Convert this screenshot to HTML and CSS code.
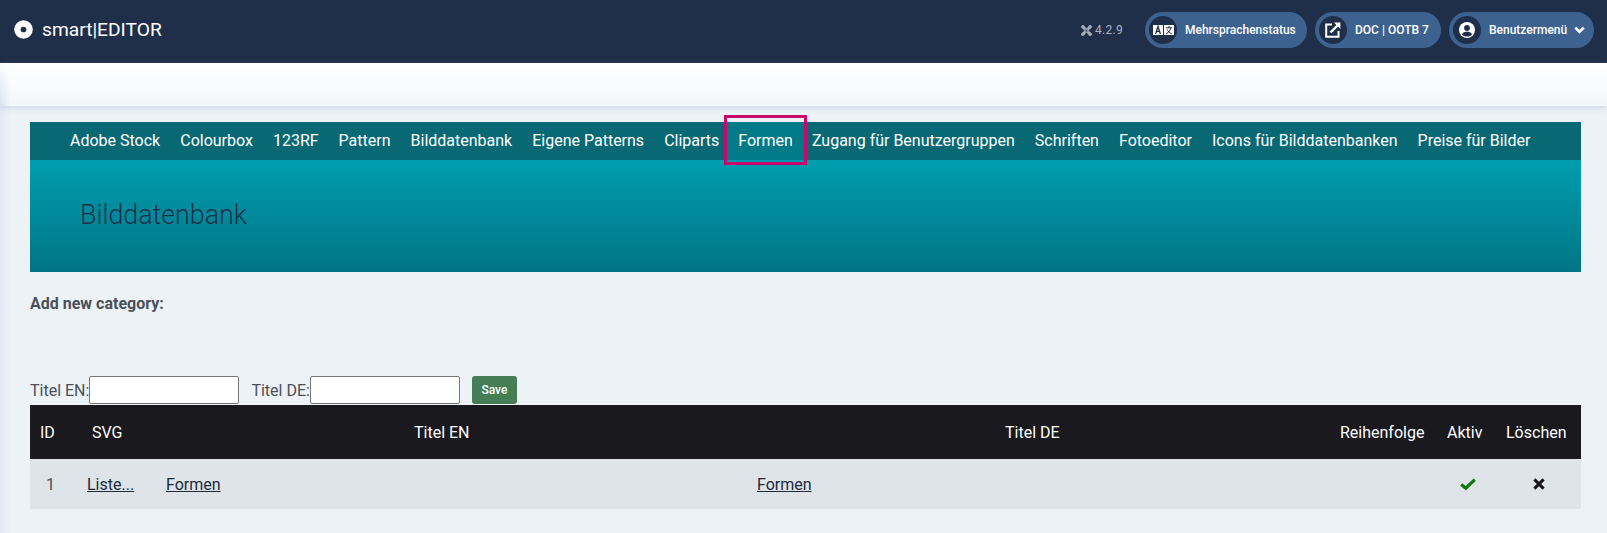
FILE: index.html
```html
<!DOCTYPE html>
<html lang="de">
<head>
<meta charset="utf-8">
<title>smart|EDITOR</title>
<link rel="stylesheet" href="styles.css">
</head>
<body>
<header class="topbar">
  <div class="brand">
    <svg class="brand-icon" viewBox="0 0 20 20"><circle cx="10" cy="10" r="9.8" fill="#fff"/><circle cx="10" cy="10" r="3" fill="#1f2f4a"/></svg>
    <span>smart|EDITOR</span>
  </div>
  <div class="top-right">
    <span class="version">
      <svg class="joomla" viewBox="0 0 12 12"><path d="M2 2 L10 10 M10 2 L2 10" stroke="#a4adba" stroke-width="3.2" fill="none"/><path d="M3 6 L6 3 L9 6 L6 9 Z" fill="#8d97a6"/><circle cx="6" cy="6" r="1" fill="#3e5170"/><circle cx="2" cy="2" r="1.9" fill="#a4adba"/><circle cx="10" cy="2" r="1.9" fill="#a4adba"/><circle cx="2" cy="10" r="1.9" fill="#a4adba"/><circle cx="10" cy="10" r="1.9" fill="#a4adba"/></svg>
      4.2.9
    </span>
    <a class="pill pill-lang">
      <span class="pill-icon"><svg viewBox="0 0 21 10" width="21" height="10"><rect width="10" height="10" fill="#fff"/><rect x="11" width="10" height="10" fill="#fff"/><path d="M2.6 9 L5 1.4 L7.4 9 M3.5 6.4 H6.5" stroke="#1f2f4a" stroke-width="1.3" fill="none"/><path d="M13 2.8 H19 M16 1 V2.8 M18 2.8 C17.2 5.6 15.6 7.6 13.2 8.8 M14.2 4.6 C15.2 6.6 17 8 18.8 8.8" stroke="#1f2f4a" stroke-width="1" fill="none"/></svg></span>
      <span>Mehrsprachenstatus</span>
    </a>
    <a class="pill pill-doc">
      <span class="pill-icon"><svg viewBox="0 0 16 16" width="16" height="16"><path d="M7 2.5 H1.2 V14.8 H13.5 V9" stroke="#fff" stroke-width="2" fill="none"/><path d="M5.5 10.5 L13 3" stroke="#fff" stroke-width="2.4" fill="none"/><path d="M9 0.6 H15.4 V7 Z" fill="#fff"/></svg></span>
      <span>DOC | OOTB 7</span>
    </a>
    <a class="pill pill-user">
      <span class="pill-icon"><svg viewBox="0 0 16 16" width="16" height="16"><circle cx="8" cy="8" r="8" fill="#fff"/><circle cx="8" cy="6" r="2.9" fill="#1f2f4a"/><path d="M2.9 12.6 C4 10 6 9.8 8 9.8 C10 9.8 12 10 13.1 12.6 C11.8 14 10 14.6 8 14.6 C6 14.6 4.2 14 2.9 12.6 Z" fill="#1f2f4a"/></svg></span>
      <span>Benutzermenü</span>
      <svg class="chevron" viewBox="0 0 12 8" width="11" height="8"><path d="M1.4 1.4 L6 6 L10.6 1.4" stroke="#fff" stroke-width="3" fill="none"/></svg>
    </a>
  </div>
</header>
<div class="subhead"></div>
<main class="content">
  <section class="banner">
    <nav class="tabs">
      <a class="tab">Adobe Stock</a>
      <a class="tab">Colourbox</a>
      <a class="tab">123RF</a>
      <a class="tab">Pattern</a>
      <a class="tab">Bilddatenbank</a>
      <a class="tab">Eigene Patterns</a>
      <a class="tab">Cliparts</a>
      <a class="tab tab-active">Formen</a>
      <a class="tab">Zugang für Benutzergruppen</a>
      <a class="tab">Schriften</a>
      <a class="tab">Fotoeditor</a>
      <a class="tab">Icons für Bilddatenbanken</a>
      <a class="tab">Preise für Bilder</a>
    </nav>
    <h1 class="banner-title">Bilddatenbank</h1>
  </section>
  <p class="add-title">Add new category:</p>
  <form class="add-form">
    <label class="field">Titel EN:<input class="text-input" type="text"></label>
    <label class="field">Titel DE:<input class="text-input" type="text"></label>
    <button class="save" type="button">Save</button>
  </form>
  <table class="grid">
    <thead>
      <tr>
        <th class="c-id">ID</th>
        <th class="c-svg">SVG</th>
        <th class="c-en">Titel EN</th>
        <th class="c-de">Titel DE</th>
        <th class="c-order">Reihenfolge</th>
        <th class="c-active">Aktiv</th>
        <th class="c-del">Löschen</th>
      </tr>
    </thead>
    <tbody>
      <tr>
        <td class="td-id">1</td>
        <td><a class="link">Liste...</a></td>
        <td><a class="link">Formen</a></td>
        <td><a class="link">Formen</a></td>
        <td></td>
        <td class="td-active"><svg viewBox="0 0 16 12" width="16" height="12"><path d="M1.2 6.4 L5.8 10.2 L14.8 1.6" stroke="#0b7a0b" stroke-width="3.2" fill="none"/></svg></td>
        <td class="td-del"><svg viewBox="0 0 12 12" width="12" height="12"><path d="M1.4 1.4 L10.6 10.6 M10.6 1.4 L1.4 10.6" stroke="#16161c" stroke-width="3" fill="none"/></svg></td>
      </tr>
    </tbody>
  </table>
</main>
</body>
</html>
```

FILE: styles.css
```css
* { box-sizing: border-box; }
html, body { margin: 0; height: 100%; }
body {
  background: #edf2f7;
  font-family: Roboto, "Liberation Sans", sans-serif;
  font-size: 16px;
  color: #495057;
  overflow: hidden;
}
.topbar {
  height: 63px;
  background: #1f2f4a;
  display: flex;
  align-items: center;
  justify-content: space-between;
  padding: 0 13px 3px 14px;
}
.brand { display: flex; align-items: center; gap: 9px; padding-bottom: 1px; color: #fff; font-size: 19.2px; }
.brand-icon { width: 19px; height: 19px; }
.top-right { display: flex; align-items: center; gap: 8px; }
.version { display: flex; align-items: center; gap: 3px; color: #aab2bd; font-size: 12px; margin-right: 14px; letter-spacing: 0.3px; }
.joomla { width: 11px; height: 11px; }
.pill {
  height: 36px;
  display: flex;
  align-items: center;
  background: #3e6290;
  border-radius: 18px;
  padding: 0 4px;
  color: #fff;
  font-size: 12px;
  font-weight: 500;
}
.pill-icon {
  width: 28px;
  height: 28px;
  border-radius: 50%;
  background: #1f2f4a;
  display: flex;
  align-items: center;
  justify-content: center;
  margin-right: 8px;
}
.pill-lang { width: 162px; }
.pill-doc { width: 126px; }
.pill-user { width: 145px; }
.chevron { margin-left: 7px; }
.subhead {
  position: relative;
  z-index: 1;
  height: 43px;
  background: linear-gradient(#fff, #f3f6fa);
  box-shadow: 0 2px 6px rgba(140, 165, 200, 0.35);
}
.subhead::before {
  content: "";
  position: absolute;
  top: 0;
  bottom: 0;
  left: 0;
  width: 10px;
  background: linear-gradient(rgba(205, 217, 235, 0), rgba(205, 217, 235, 0.7));
  -webkit-mask-image: linear-gradient(90deg, #000, transparent);
  mask-image: linear-gradient(90deg, #000, transparent);
}
.content {
  padding: 16px 26px 0 30px;
  background: linear-gradient(90deg, #e3e9f3, #edf2f7 10px);
  height: 427px;
}
.banner { height: 150px; }
.tabs {
  height: 38px;
  background: #086974;
  display: flex;
  padding-left: 30px;
}
.tab {
  height: 38px;
  padding: 0 10px;
  color: #fff;
  font-size: 16px;
  line-height: 38px;
  white-space: nowrap;
  font-weight: 400;
}
.tab-active {
  position: relative;
  padding: 0 9px;
  background: #017a88;
  box-shadow: -3px 0 0 #017a88, 3px 0 0 #017a88;
}
.tab-active::after {
  content: "";
  position: absolute;
  left: -5px;
  right: -5px;
  top: -7px;
  bottom: -5px;
  border: 3px solid #c8086c;
}
.banner-title {
  height: 112px;
  margin: 0;
  padding: 39px 0 0 50px;
  background: linear-gradient(#009eaf, #007586);
  color: #1f2f4a;
  font-size: 26.8px;
  line-height: 32px;
  font-weight: 300;
}
.add-title { margin: 23px 0 0; font-size: 16px; line-height: 18px; font-weight: 700; color: #495057; }
.add-form { display: flex; align-items: center; margin-top: 63px; height: 28px; font-size: 16px; }
.field { display: flex; align-items: center; margin-right: 12px; }
.text-input {
  width: 150px;
  height: 28px;
  margin: 0;
  padding: 1px 2px;
  background: #fff;
  border: 1px solid #767676;
  border-radius: 2px;
}
.save {
  height: 28px;
  width: 45px;
  padding: 0;
  border: 0;
  border-radius: 3px;
  background: #457d54;
  color: #fff;
  font-family: inherit;
  font-size: 12px;
  font-weight: 500;
}
.grid { width: 1551px; margin-top: 1px; border-collapse: collapse; table-layout: fixed; }
.grid th {
  height: 54px;
  background: #19191e;
  color: #fff;
  font-size: 16px;
  font-weight: 400;
  text-align: left;
  padding: 0;
}
.grid td {
  height: 50px;
  background: #dfe4e8;
  padding: 0;
  font-size: 16px;
  color: #495057;
}
.grid td svg { display: block; }
.c-id { width: 57px; padding-left: 10px !important; }
.c-svg { width: 79px; padding-left: 5px !important; }
.c-en { width: 591px; padding-left: 248px !important; }
.c-de { width: 583px; padding-left: 248px !important; }
.c-order { width: 107px; }
.c-active { width: 59px; }
.c-del { width: 75px; }
.grid .td-id { padding-left: 16px; }
.grid .td-active { padding-left: 13px; }
.grid .td-del { padding-left: 27px; }
.link { color: #20293a; text-decoration: underline; }
```
